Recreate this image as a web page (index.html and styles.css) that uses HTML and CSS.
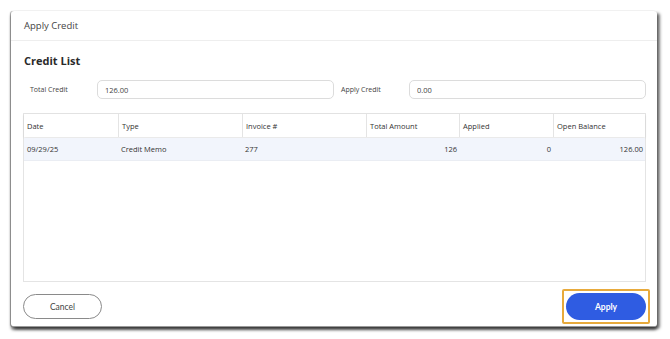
FILE: index.html
```html
<!DOCTYPE html>
<html lang="en">
<head>
  <meta charset="UTF-8" />
  <meta name="viewport" content="width=device-width, initial-scale=1.0" />
  <link rel="stylesheet" href="styles.css">
</head>
<body>
  <div class="dialog">
    <div class="dialog-header">Apply Credit</div>

    <div class="dialog-body">
      <h2>Credit List</h2>

      <div class="fields">
        <label>Total Credit</label>
        <input type="text" value="126.00" readonly />
        <label>Apply Credit</label>
        <input type="text" value="0.00" />
      </div>

      <div class="grid">
        <div class="grid-head">
          <div>Date</div>
          <div>Type</div>
          <div>Invoice #</div>
          <div>Total Amount</div>
          <div>Applied</div>
          <div>Open Balance</div>
        </div>
        <div class="grid-row">
          <div>09/29/25</div>
          <div>Credit Memo</div>
          <div>277</div>
          <div class="num">126</div>
          <div class="num">0</div>
          <div class="num">126.00</div>
        </div>
      </div>
    </div>

    <div class="dialog-footer">
      <button class="btn btn-cancel">Cancel</button>
      <span class="focus-ring">
        <button class="btn btn-apply">Apply</button>
      </span>
    </div>
  </div>
</body>
</html>
```

FILE: styles.css
```css
:root {
  --text-color: #333333;
  --line-color: #e4e4e4;
  --blue: #2f5ce2;
  --focus: #e8aa3c;
}
body {
  margin: 0;
  padding: 11px 0 12px 11px;
  background-color: #ffffff;
  font-family: "Open Sans", sans-serif;
  color: var(--text-color);
}

.dialog {
  width: 646px;
  height: 316px;
  box-sizing: border-box;
  background: #ffffff;
  border-radius: 3px;
  border-bottom: 1px solid #9a9a9a;
  box-shadow: 0 3px 3px rgba(0, 0, 0, 0.55), -1px 0 1px rgba(0, 0, 0, 0.35), 3px 2px 3px rgba(0, 0, 0, 0.5);
  display: flex;
  flex-direction: column;
}

.dialog-header {
  height: 29px;
  flex-shrink: 0;
  padding-left: 13px;
  display: flex;
  align-items: center;
  font-size: 9.5px;
  color: #444444;
  border-bottom: 1px solid #eeeeee;
}

.dialog-body {
  padding: 0 11px 0 12px;
}
.dialog-body h2 {
  margin: 12px 0 0 1px;
  font-size: 11px;
  font-weight: 700;
  color: #2a2a2a;
  line-height: 15px;
}

.fields {
  display: grid;
  grid-template-columns: 74px 1fr 75px 1fr;
  align-items: center;
  margin-top: 12px;
}
.fields label {
  font-size: 7px;
  padding-left: 7px;
  color: #444444;
}
.fields input {
  height: 19px;
  box-sizing: border-box;
  border: 1px solid #dcdcdc;
  border-radius: 5px;
  padding: 0 7px;
  font-family: "Open Sans", sans-serif;
  font-size: 7.5px;
  color: #444444;
  outline: none;
}

.grid {
  margin-top: 14px;
  height: 169px;
  box-sizing: border-box;
  border: 1px solid var(--line-color);
}
.grid-head,
.grid-row {
  display: grid;
  grid-template-columns: 94px 124px 124px 93px 94px 1fr;
  font-size: 7.5px;
}
.grid-head {
  height: 23px;
  box-shadow: 0 1px 2px rgba(0, 0, 0, 0.12);
  color: #333333;
}
.grid-head div {
  display: flex;
  align-items: center;
  padding-left: 3px;
  border-left: 1px solid var(--line-color);
}
.grid-head div:first-child {
  border-left: none;
}
.grid-row {
  height: 22px;
  margin-top: 1px;
  background-color: #f2f5fc;
  border-bottom: 1px solid #eaedf3;
}
.grid-row div {
  display: flex;
  align-items: center;
  padding-left: 3px;
}
.grid-row .num {
  justify-content: flex-end;
  padding-right: 2px;
}

.dialog-footer {
  margin-top: 7px;
  padding: 0 7px 0 12px;
  display: flex;
  justify-content: space-between;
  align-items: center;
}
.btn {
  font-family: "Lato", sans-serif;
  font-size: 8.5px;
  border-radius: 14px;
  cursor: pointer;
}
.btn-cancel {
  width: 79px;
  height: 25px;
  background: #ffffff;
  border: 1px solid #8a8a8a;
  color: #444444;
}
.focus-ring {
  display: flex;
  padding: 2px;
  border: 2px solid var(--focus);
  border-radius: 2px;
}
.btn-apply {
  width: 80px;
  height: 27px;
  background: var(--blue);
  border: none;
  color: #ffffff;
  font-weight: 700;
}
```
